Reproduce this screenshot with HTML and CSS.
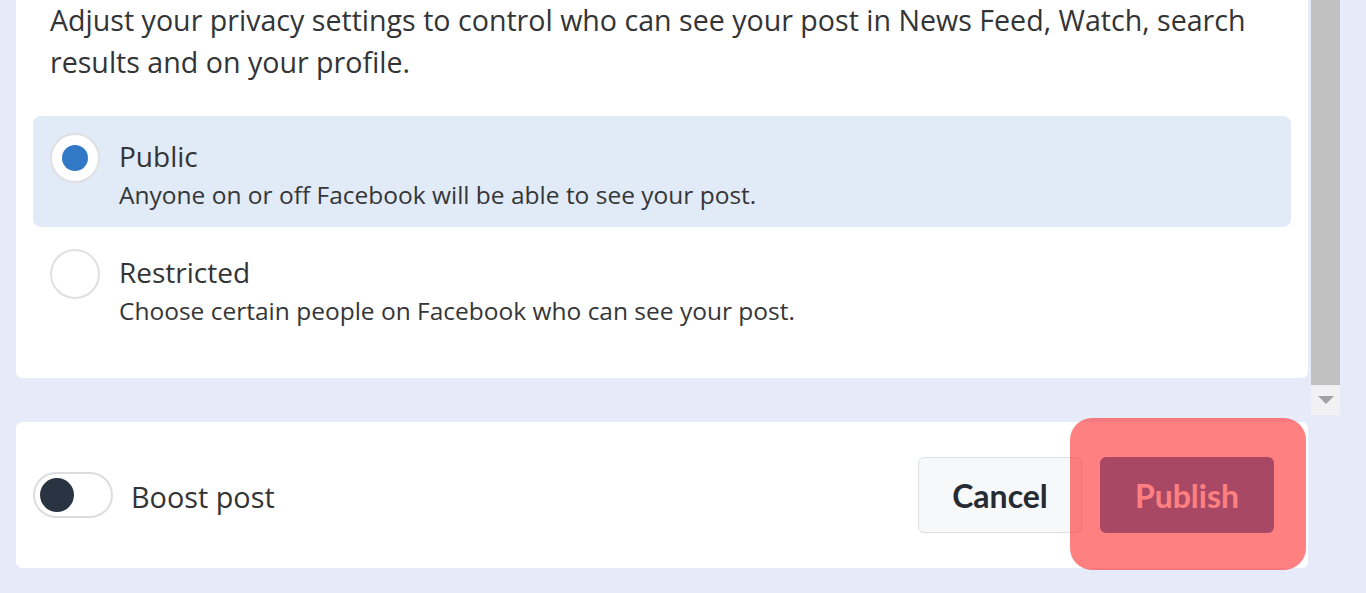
FILE: index.html
```html
<!DOCTYPE html>
<html lang="en">
<head>
    <meta charset="UTF-8">
    <meta name="viewport" content="width=device-width, initial-scale=1.0">
    <title>Post privacy</title>
    <link rel="stylesheet" href="styles.css">
</head>
<body>
    <div class="page">
        <div class="scroller">
            <div class="card privacy">
                <p class="intro">Adjust your privacy settings to control who can see your post in News Feed, Watch, search results and on your profile.</p>
                <div class="options">
                    <div class="option selected">
                        <span class="radio"><span class="dot"></span></span>
                        <div class="text">
                            <div class="name">Public</div>
                            <div class="desc">Anyone on or off Facebook will be able to see your post.</div>
                        </div>
                    </div>
                    <div class="option">
                        <span class="radio"></span>
                        <div class="text">
                            <div class="name">Restricted</div>
                            <div class="desc">Choose certain people on Facebook who can see your post.</div>
                        </div>
                    </div>
                </div>
            </div>
            <div class="scrollbar">
                <div class="thumb"></div>
                <div class="arrow"></div>
            </div>
        </div>
        <div class="card footer">
            <div class="boost">
                <span class="toggle"><span class="knob"></span></span>
                <span class="boost-label">Boost post</span>
            </div>
            <div class="actions">
                <button class="btn cancel">Cancel</button>
                <div class="publish-wrap">
                    <button class="btn publish">Publish</button>
                    <span class="highlight"></span>
                </div>
            </div>
        </div>
    </div>
</body>
</html>
```

FILE: styles.css
```css
* {
    margin: 0;
    padding: 0;
    box-sizing: border-box;
}

body {
    background-color: #e7ebf9;
    font-family: "Open Sans", "Noto Sans", sans-serif;
    color: #333436;
    overflow: hidden;
}

.page {
    padding-left: 16px;
    width: 1366px;
    height: 593px;
}

.scroller {
    display: flex;
    height: 415px;
}

.card {
    background-color: #fff;
    border-radius: 6px;
    width: 1292px;
}

.privacy {
    height: 378px;
    border-radius: 0 0 6px 6px;
    margin-right: 3px;
}

.intro {
    font-size: 28.6px;
    line-height: 42px;
    padding: 0 40px 0 34px;
    margin-top: -1px;
    height: 100px;
}

.options {
    display: flex;
    flex-direction: column;
    gap: 5px;
    padding: 0 17px;
    margin-top: 17px;
}

.option {
    display: flex;
    gap: 19px;
    height: 111px;
    padding: 17px 17px 0;
    border-radius: 8px;
}

.option.selected {
    background-color: #e1eaf7;
}

.radio {
    width: 50px;
    height: 50px;
    flex: none;
    border-radius: 50%;
    background-color: #fff;
    border: 2px solid #dfe0e2;
    display: flex;
    align-items: center;
    justify-content: center;
}

.radio .dot {
    width: 26px;
    height: 26px;
    border-radius: 50%;
    background-color: #3178c6;
}

.text .name {
    font-size: 28px;
    line-height: 36px;
    margin-top: 5px;
}

.text .desc {
    font-size: 24.5px;
    line-height: 32px;
    margin-top: 5px;
    color: #353638;
}

.scrollbar {
    width: 29px;
    height: 415px;
    background-color: #f1f1f3;
    display: flex;
    flex-direction: column;
}

.scrollbar .thumb {
    height: 385px;
    background-color: #c1c1c1;
}

.scrollbar .arrow {
    flex: 1;
    display: flex;
    justify-content: center;
    align-items: center;
}

.scrollbar .arrow::after {
    content: "";
    border-left: 8px solid transparent;
    border-right: 8px solid transparent;
    border-top: 8px solid #a3a3a3;
}

.footer {
    margin-top: 7px;
    height: 146px;
    display: flex;
    justify-content: space-between;
    align-items: center;
    padding: 0 34px 0 17px;
}

.boost {
    display: flex;
    align-items: center;
    gap: 18px;
}

.toggle {
    width: 80px;
    height: 46px;
    border: 2px solid #dcdde0;
    border-radius: 23px;
    display: flex;
    align-items: center;
    padding-left: 5px;
}

.toggle .knob {
    width: 34px;
    height: 34px;
    border-radius: 50%;
    background-color: #283442;
}

.boost-label {
    font-size: 28.8px;
    margin-top: 2px;
}

.actions {
    display: flex;
    gap: 18px;
}

.btn {
    height: 76px;
    border-radius: 6px;
    font-family: "Lato", "Liberation Sans", sans-serif;
    font-weight: 700;
    font-size: 32px;
}

.cancel {
    width: 164px;
    background-color: #f7f8fa;
    border: 1px solid #dedfe2;
    color: #262b33;
}

.publish-wrap {
    position: relative;
}

.publish {
    width: 174px;
    background-color: #2873bc;
    border: none;
    color: #fff;
}

.highlight {
    position: absolute;
    left: -30px;
    right: -32px;
    top: -39px;
    bottom: -37px;
    border-radius: 22px;
    background-color: rgba(255, 43, 43, 0.6);
}
```
